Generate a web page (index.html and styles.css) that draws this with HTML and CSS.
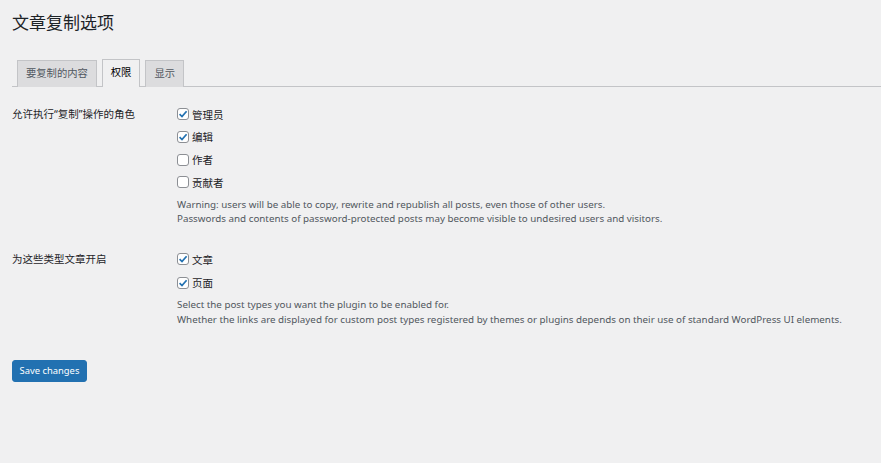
FILE: index.html
```html
<!DOCTYPE html>
<html lang="zh-CN">
<head>
<meta charset="utf-8">
<title>文章复制选项</title>
<link rel="stylesheet" href="styles.css">
</head>
<body>
<div class="wrap">
  <h1 class="title">文章复制选项</h1>
  <nav class="tabs">
    <a class="tab">要复制的内容</a>
    <a class="tab active">权限</a>
    <a class="tab">显示</a>
  </nav>
  <div class="form">
    <div class="row">
      <div class="th">允许执行“复制”操作的角色</div>
      <div class="td">
        <label class="opt"><span class="box"><svg viewBox="0 0 12 12" width="12" height="12"><path d="M2.6 6.2 L5 8.6 L9.6 3.2" fill="none" stroke="#2271b1" stroke-width="1.7"/></svg></span>管理员</label>
        <label class="opt"><span class="box"><svg viewBox="0 0 12 12" width="12" height="12"><path d="M2.6 6.2 L5 8.6 L9.6 3.2" fill="none" stroke="#2271b1" stroke-width="1.7"/></svg></span>编辑</label>
        <label class="opt"><span class="box"></span>作者</label>
        <label class="opt"><span class="box"></span>贡献者</label>
        <p class="desc">Warning: users will be able to copy, rewrite and republish all posts, even those of other users.<br>Passwords and contents of password-protected posts may become visible to undesired users and visitors.</p>
      </div>
    </div>
    <div class="row row-types">
      <div class="th">为这些类型文章开启</div>
      <div class="td">
        <label class="opt"><span class="box"><svg viewBox="0 0 12 12" width="12" height="12"><path d="M2.6 6.2 L5 8.6 L9.6 3.2" fill="none" stroke="#2271b1" stroke-width="1.7"/></svg></span>文章</label>
        <label class="opt"><span class="box"><svg viewBox="0 0 12 12" width="12" height="12"><path d="M2.6 6.2 L5 8.6 L9.6 3.2" fill="none" stroke="#2271b1" stroke-width="1.7"/></svg></span>页面</label>
        <p class="desc">Select the post types you want the plugin to be enabled for.<br>Whether the links are displayed for custom post types registered by themes or plugins depends on their use of standard WordPress UI elements.</p>
      </div>
    </div>
  </div>
  <div class="submit">
    <button class="btn" type="button">Save changes</button>
  </div>
</div>
</body>
</html>
```

FILE: styles.css
```css
html, body {
  margin: 0;
  padding: 0;
  background: #f0f0f1;
}
body {
  font-family: "Noto Sans", "Noto Sans CJK SC", sans-serif;
  color: #1d2327;
  font-size: 10.5px;
}
.wrap {
  padding-left: 12px;
}
.title {
  margin: 0;
  padding-top: 10px;
  font-family: "Noto Sans CJK SC", sans-serif;
  font-weight: 400;
  font-size: 17px;
  line-height: 24px;
  color: #1d2327;
}
.tabs {
  display: flex;
  align-items: flex-end;
  gap: 5px;
  margin-top: 25px;
  padding-left: 5px;
  border-bottom: 1px solid #c3c4c7;
  height: 27px;
}
.tab {
  display: block;
  box-sizing: border-box;
  height: 27px;
  padding: 0 8px;
  border: 1px solid #c3c4c7;
  border-bottom: none;
  background: #dcdcde;
  color: #50575e;
  font-family: "Noto Sans", "Noto Sans CJK SC", sans-serif;
  font-size: 10.3px;
  line-height: 25px;
  margin-bottom: -1px;
}
.tab.active {
  background: #f0f0f1;
  color: #000;
  height: 28px;
  padding-bottom: 1px;
}
.form {
  padding-top: 19.5px;
}
.row {
  display: grid;
  grid-template-columns: 165px 1fr;
  margin-bottom: 25px;
}
.th {
  font-family: "Noto Sans", "Noto Sans CJK SC", sans-serif;
  font-size: 10.5px;
  line-height: 15px;
  color: #1d2327;
}
.td {
  display: flex;
  flex-direction: column;
  align-items: flex-start;
}
.opt {
  display: flex;
  align-items: center;
  gap: 3px;
  height: 15px;
  margin-bottom: 7.8px;
  font-family: "Noto Sans", "Noto Sans CJK SC", sans-serif;
  font-size: 10.5px;
  color: #1d2327;
}
.row-types .opt {
  margin-bottom: 8.4px;
}
.box {
  box-sizing: border-box;
  width: 12px;
  height: 12px;
  border: 1px solid #8c8f94;
  border-radius: 3px;
  background: #fff;
  display: flex;
  align-items: center;
  justify-content: center;
}
.box svg {
  display: block;
  margin: -1px;
}
.desc {
  margin: 0;
  font-size: 9.8px;
  line-height: 14.5px;
  color: #50575e;
}
.submit {
  padding-top: 8px;
}
.btn {
  box-sizing: border-box;
  width: 75px;
  height: 22px;
  padding: 0;
  border: 1px solid #2271b1;
  border-radius: 3px;
  background: #2271b1;
  color: #fff;
  font-family: "Noto Sans", sans-serif;
  font-size: 9.4px;
  line-height: 20px;
}
```
